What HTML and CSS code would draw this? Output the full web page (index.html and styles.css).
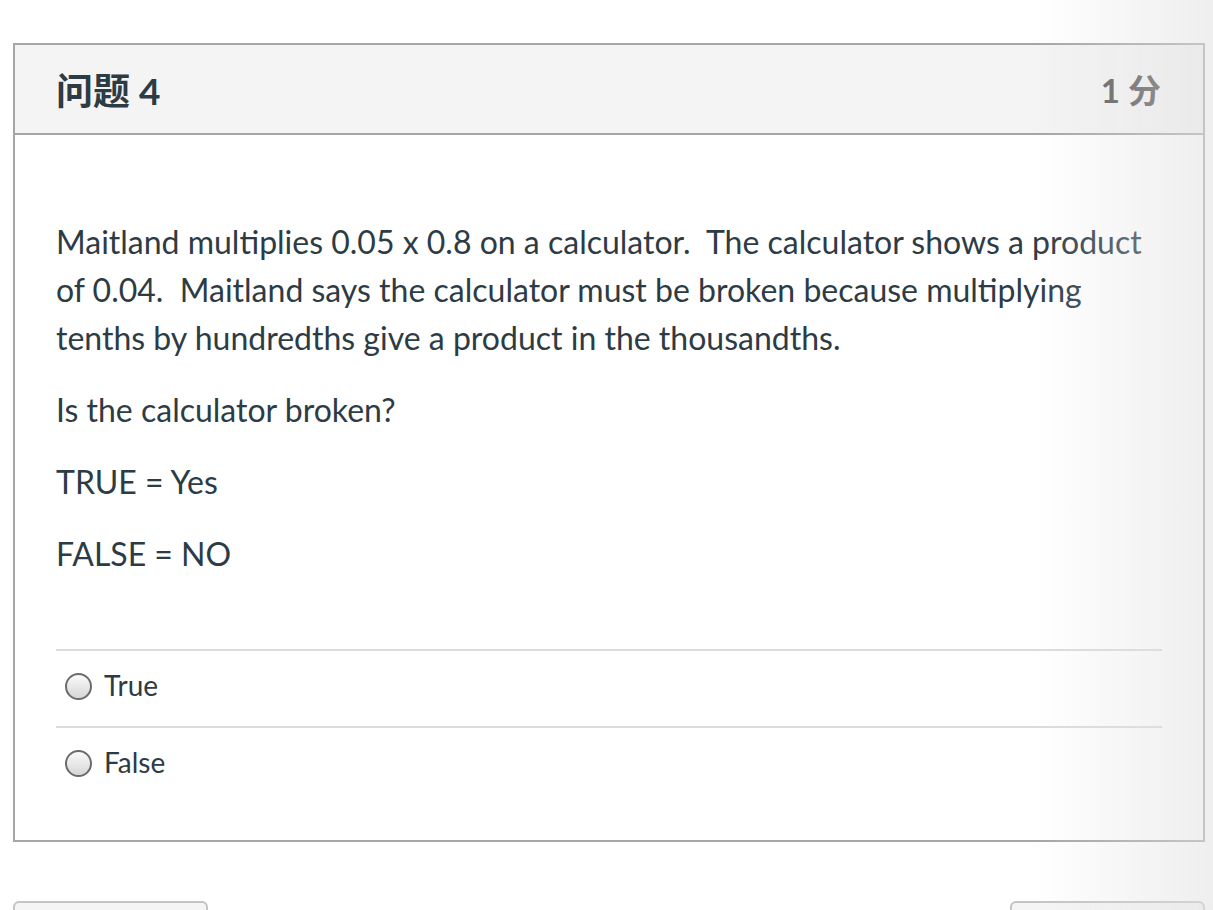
FILE: index.html
```html
<!DOCTYPE html>
<html lang="zh">
<head>
<meta charset="utf-8">
<link rel="stylesheet" href="styles.css">
</head>
<body>
<div class="page">
  <div class="question">
    <div class="q-header">
      <h2 class="q-title">问题 4</h2>
      <span class="q-points">1 分</span>
    </div>
    <div class="q-body">
      <div class="q-text">
        <p>Maitland multiplies 0.05 x 0.8 on a calculator.&nbsp; The calculator shows a product of 0.04.&nbsp; Maitland says the calculator must be broken because multiplying tenths by hundredths give a product in the thousandths.</p>
        <p>Is the calculator broken?</p>
        <p>TRUE = Yes</p>
        <p>FALSE = NO</p>
      </div>
      <div class="answers">
        <label class="answer"><span class="radio"></span><span class="a-text">True</span></label>
        <label class="answer"><span class="radio"></span><span class="a-text">False</span></label>
      </div>
    </div>
  </div>
  <div class="nav">
    <span class="btn"></span>
    <span class="btn"></span>
  </div>
</div>
<div class="shade"></div>
</body>
</html>
```
FILE: styles.css
```css
html, body {
  margin: 0;
  padding: 0;
  background: #fff;
}
body {
  font-family: Lato, "Noto Sans CJK SC", sans-serif;
  color: #2d3b45;
  overflow: hidden;
  height: 910px;
}
.page {
  padding: 43px 8px 0 13px;
}
.question {
  width: 1188px;
  border: 2px solid #a6a6a6;
}
.q-header {
  display: flex;
  justify-content: space-between;
  align-items: center;
  height: 88px;
  padding: 0 42px 0 41px;
  background: #f4f4f4;
  border-bottom: 2px solid #a6a6a6;
}
.q-title {
  margin: 0;
  font-size: 37px;
  font-weight: 700;
  color: #2d3b45;
}
.q-points {
  font-size: 33px;
  font-weight: 700;
  color: #555;
}
.q-body {
  padding: 83px 41px 37px 41px;
}
.q-text {
  font-size: 32px;
  line-height: 48px;
}
.q-text p {
  margin: 0 0 24px 0;
}
.q-text p:last-child {
  margin-bottom: 0;
}
.answers {
  margin-top: 71px;
}
.answer {
  display: flex;
  align-items: center;
  height: 75px;
  border-top: 2px solid #dcdcdc;
  font-size: 28px;
}
.a-text {
  position: relative;
  top: -4px;
}
.radio {
  width: 27px;
  height: 27px;
  margin: -5px 12px 0 9px;
  border: 2px solid #6b6b6b;
  border-radius: 50%;
  background: linear-gradient(#fafafa, #d6d6d6);
  box-sizing: border-box;
}
.nav {
  display: flex;
  justify-content: space-between;
  margin-top: 59px;
  width: 1192px;
}
.btn {
  width: 195px;
  height: 40px;
  border: 2px solid #c4c4c4;
  border-radius: 6px;
  background: #f5f5f5;
  box-sizing: border-box;
}
.shade {
  position: fixed;
  top: 0;
  right: 0;
  width: 180px;
  height: 100%;
  background: linear-gradient(to right, rgba(225,225,225,0), rgba(225,225,225,0.55));
  pointer-events: none;
}
```
